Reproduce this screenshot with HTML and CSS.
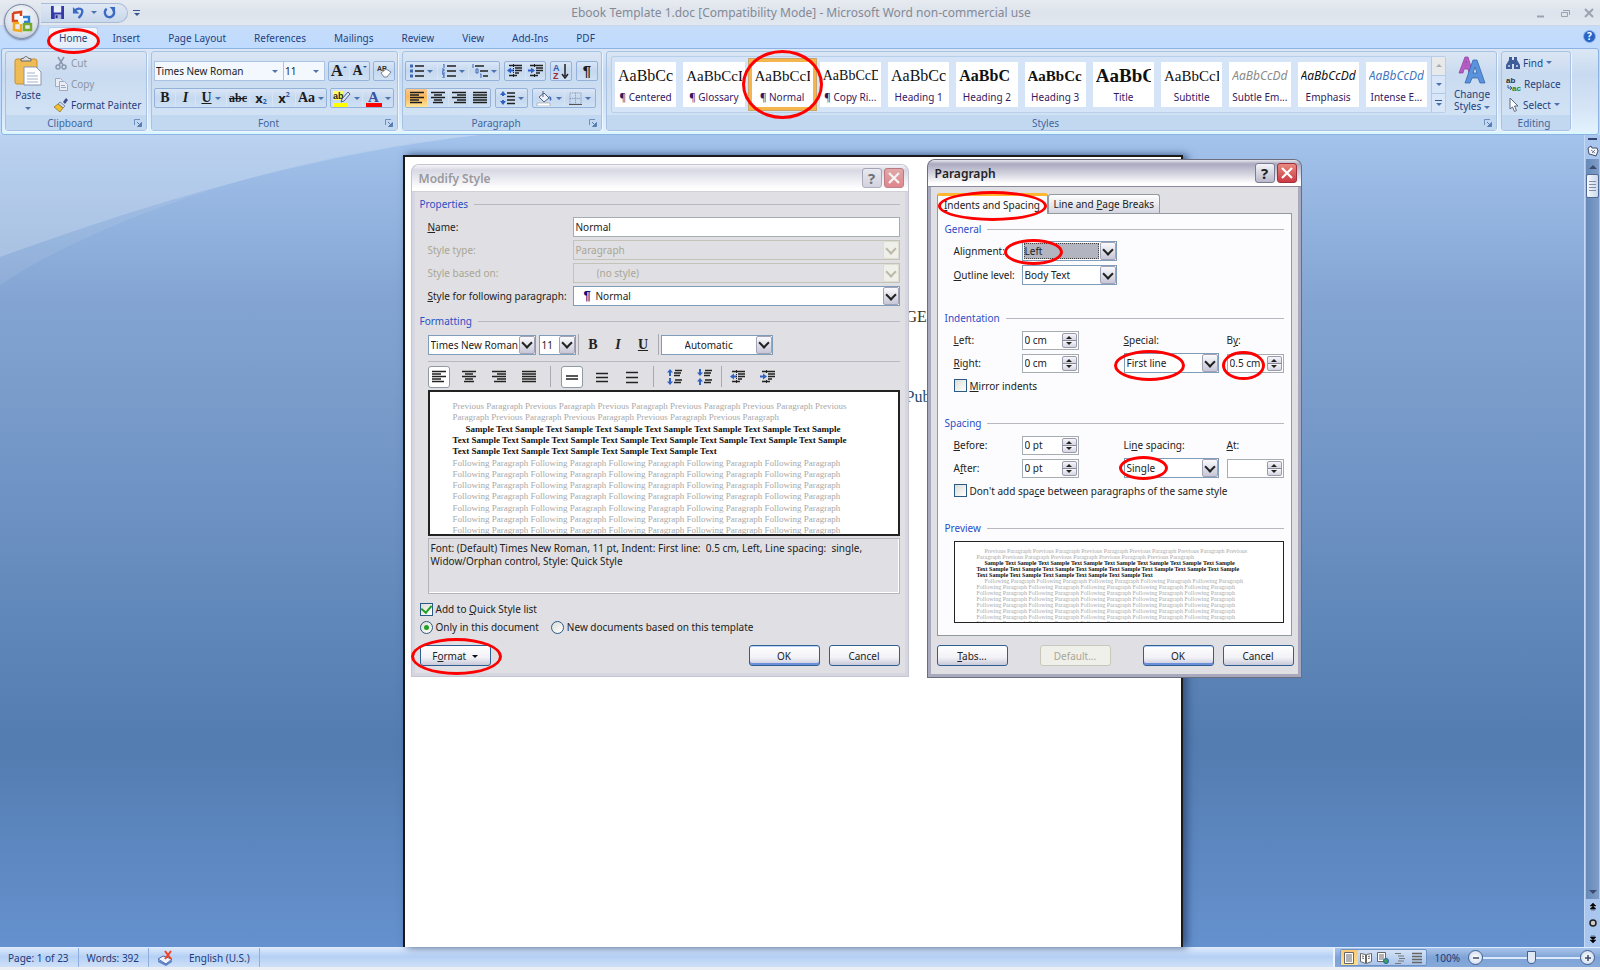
FILE: index.html
```html
<!DOCTYPE html>
<html lang="en">
<head>
<meta charset="utf-8">
<title>Ebook Template 1.doc [Compatibility Mode] - Microsoft Word non-commercial use</title>
<link rel="stylesheet" href="styles.css">
</head>
<body>
<svg class="defs" aria-hidden="true">
  <symbol id="lines-left" viewBox="0 0 16 14"><path d="M1 1.500h14M1 4h9M1 6.500h14M1 9h9M1 11.500h12" stroke="currentColor" stroke-width="1.500"/></symbol>
  <symbol id="lines-center" viewBox="0 0 16 14"><path d="M1 1.500h14M4 4h8M1 6.500h14M4 9h8M3 11.500h10" stroke="currentColor" stroke-width="1.500"/></symbol>
  <symbol id="lines-right" viewBox="0 0 16 14"><path d="M1 1.500h14M6 4h9M1 6.500h14M6 9h9M3 11.500h12" stroke="currentColor" stroke-width="1.500"/></symbol>
  <symbol id="lines-full" viewBox="0 0 16 14"><path d="M1 1.500h14M1 4h14M1 6.500h14M1 9h14M1 11.500h14" stroke="currentColor" stroke-width="1.500"/></symbol>
  <symbol id="outdent" viewBox="0 0 16 14"><path d="M2 1.500h13M8 4h7M8 6.500h7M8 9h4M2 11.500h8" stroke="#222" stroke-width="1.500"/><path d="M0 6.500l4-3v2h3v2H4v2z" fill="#2f62c4"/><path d="M6.500 0v14" stroke="#222" stroke-dasharray="1 1"/></symbol>
  <symbol id="indent" viewBox="0 0 16 14"><path d="M2 1.500h13M8 4h7M8 6.500h7M8 9h4M2 11.500h8" stroke="#222" stroke-width="1.500"/><path d="M7 6.500l-4-3v2H0v2h3v2z" fill="#2f62c4"/><path d="M6.500 0v3M6.500 10v4" stroke="#222" stroke-dasharray="1 1"/></symbol>
  <symbol id="launch" viewBox="0 0 8 8"><path d="M.5 6V.5H6" fill="none" stroke="#6f8fbd"/><path d="M3 3l3 3M7.500 3.500v4h-4z" fill="#5b7db0" stroke="#5b7db0"/></symbol>
  <symbol id="para-space-out" viewBox="0 0 16 16"><path d="M8 1.500h7M7 4h7M7 6.500h6M8 11h7M7 13.500h7" stroke="#222" stroke-width="1.500"/><path d="M3 0l3 3.500H4V7H2V3.500H0zM3 16l3-3.500H4V9H2v3.500H0z" fill="#2f62c4"/></symbol>
  <symbol id="para-space-in" viewBox="0 0 16 16"><path d="M8 1.500h7M7 4h7M7 6.500h6M8 11h7M7 13.500h7" stroke="#222" stroke-width="1.500"/><path d="M3 7l3-3.500H4V0H2v3.500H0zM3 9l3 3.500H4V16H2v-3.500H0z" fill="#2f62c4"/></symbol>
</svg>

<header class="titlebar">
  <button class="orb" aria-label="Office Button">
    <svg viewBox="0 0 24 24" width="24" height="24" fill="none" stroke-width="2.500"><path d="M3 3l8-1v4M3 3v8h5" stroke="#d8461c"/><path d="M13 7h6v5h-5" stroke="#2b7fd4"/><path d="M9 13H4v7l7 1v-7" stroke="#f5a81c"/><path d="M14 14h7v6h-7z" stroke="#74ab2c"/></svg>
  </button>
  <div class="quick">
    <button aria-label="Save"><svg viewBox="0 0 14 14" width="13" height="13"><path d="M0 0h14v14H0z" fill="#3438a8"/><path d="M3 0h8v7H3z" fill="#e8eefa"/><path d="M4 9h7v5H4z" fill="#aab6dd"/><path d="M5 10h2v3H5z" fill="#222a80"/></svg></button>
    <button aria-label="Undo"><svg viewBox="0 0 14 14" width="13" height="13"><path d="M3 5c4-4 9-2 8 2-.5 3-3 5-4 6" fill="none" stroke="#3a6ac2" stroke-width="2.400"/><path d="M1 1v7h7z" fill="#3a6ac2"/></svg></button>
    <i class="tri"></i>
    <button aria-label="Repeat"><svg viewBox="0 0 14 14" width="13" height="13"><path d="M4 3a5 5 0 1 0 6.500.5" fill="none" stroke="#3a6ac2" stroke-width="2.600"/><path d="M7 1h6v6z" fill="#3a6ac2"/></svg></button>
  </div>
  <button class="customize" aria-label="Customize"><i class="bar"></i><i class="tri"></i></button>
  <h1>Ebook Template 1.doc [Compatibility Mode] - Microsoft Word non-commercial use</h1>
  <div class="winctl">
    <button aria-label="Minimize"><svg viewBox="0 0 10 10" width="10" height="10"><path d="M1 8.500h7" stroke="#9ba3b0" stroke-width="2"/></svg></button>
    <button aria-label="Restore"><svg viewBox="0 0 10 10" width="10" height="10" fill="none" stroke="#9ba3b0"><path d="M1.500 4.500h6v4h-6zM3 2.500h6.500V7"/></svg></button>
    <button aria-label="Close"><svg viewBox="0 0 10 10" width="10" height="10"><path d="M1 1l8 8M9 1L1 9" stroke="#9ba3b0" stroke-width="2"/></svg></button>
  </div>
</header>

<nav class="tabs">
  <button class="tab active">Home<span class="ring ring-home"></span></button>
  <button class="tab">Insert</button>
  <button class="tab">Page Layout</button>
  <button class="tab">References</button>
  <button class="tab">Mailings</button>
  <button class="tab">Review</button>
  <button class="tab">View</button>
  <button class="tab">Add-Ins</button>
  <button class="tab">PDF</button>
  <button class="help" aria-label="Help">?</button>
</nav>

<section class="ribbon">
  <section class="group">
    <div class="group-body clip">
      <button class="paste"><svg viewBox="0 0 28 30" width="28" height="30"><rect x="1" y="3" width="22" height="25" rx="2" fill="#efbb55" stroke="#c98f2c"/><path d="M7 5V3l3-1c1-2 3-2 4 0l3 1v2z" fill="#ddd" stroke="#666"/><path d="M10 11h12l5 5v13H10z" fill="#fff" stroke="#8796b4"/><path d="M13 17h8M13 20h11M13 23h11M13 26h11" stroke="#a5b2cc"/></svg><span>Paste</span><i class="tri"></i></button>
      <div class="stack">
        <button class="cmd off"><svg viewBox="0 0 14 14" width="14" height="14" fill="none" stroke="#8b97ad" stroke-width="1.500"><path d="M4 1l5 8M10 1L5 9"/><circle cx="4" cy="11" r="2"/><circle cx="10" cy="11" r="2"/></svg>Cut</button>
        <button class="cmd off"><svg viewBox="0 0 14 14" width="14" height="14" fill="#e8edf5" stroke="#9daac2"><path d="M1.500 1.500h5l2 2v6h-7z"/><path d="M5.500 4.500h5l3 3v6h-8z"/><path d="M7 8.500h4M7 10.500h5"/></svg>Copy</button>
        <button class="cmd"><svg viewBox="0 0 14 14" width="14" height="14"><path d="M9 4l3-4 2 2-3 4z" fill="#3d4d8a"/><path d="M6 4l5 4-2 2-5-4z" fill="#cfd8ea" stroke="#5a6a95" stroke-width=".7"/><path d="M4 6l5 4-3 4-6-5z" fill="#f0c030" stroke="#8c6a20" stroke-width=".7"/></svg>Format Painter</button>
      </div>
    </div>
    <footer><span>Clipboard</span><button aria-label="Clipboard options"><svg width="8" height="8"><use href="#launch"/></svg></button></footer>
  </section>

  <section class="group">
    <div class="group-body rows">
      <div class="row">
        <div class="pair">
          <span class="flat font-name"><select aria-label="Font"><option>Times New Roman</option></select><i class="tri"></i></span>
          <span class="flat font-size"><select aria-label="Font size"><option>11</option></select><i class="tri"></i></span>
        </div>
        <div class="cells">
          <button class="serif big" aria-label="Grow Font"><b>A</b><i class="up"></i></button><button class="serif" aria-label="Shrink Font"><b>A</b><i class="down"></i></button>
        </div>
        <div class="cells"><button aria-label="Clear Formatting"><svg viewBox="0 0 16 14" width="16" height="14"><text x="1" y="7" font-size="7" font-weight="700" font-family="Liberation Sans" fill="#333">AB</text><path d="M5 9l5-4 5 3-4 5H8z" fill="#fff" stroke="#77839b"/></svg></button></div>
      </div>
      <div class="row">
        <div class="cells">
          <button class="serif"><b>B</b></button><button class="serif"><b><i>I</i></b></button><button class="serif split"><b><u>U</u></b><i class="tri"></i></button><button class="serif medium"><b><s>abc</s></b></button><button class="medium bold">x<sub>2</sub></button><button class="medium bold">x<sup>2</sup></button><button class="serif split"><b>Aa</b><i class="tri"></i></button>
        </div>
        <div class="cells">
          <button class="split" aria-label="Highlight"><svg viewBox="0 0 18 17" width="18" height="17"><path d="M0 13h15v4H0z" fill="#ff0"/><path d="M0 1h10v9H0z" fill="#ff6"/><text x="0" y="9" font-size="9" font-weight="700" font-family="Liberation Sans" fill="#222">ab</text><path d="M15 2l2 2-6 7-3 1 1-3z" fill="#dfe6f4" stroke="#4c5f8d"/></svg><i class="tri"></i></button>
          <button class="split" aria-label="Font Color"><svg viewBox="0 0 16 17" width="16" height="17"><text x="2" y="12" font-size="15" font-weight="700" font-family="Liberation Serif" fill="#3553a0">A</text><path d="M0 13h16v4H0z" fill="#f00"/></svg><i class="tri"></i></button>
        </div>
      </div>
    </div>
    <footer><span>Font</span><button aria-label="Font options"><svg width="8" height="8"><use href="#launch"/></svg></button></footer>
  </section>

  <section class="group">
    <div class="group-body rows para">
      <div class="row">
        <div class="cells">
          <button class="split" aria-label="Bullets"><svg viewBox="0 0 14 14" width="14" height="14"><path d="M5 2h9M5 7h9M5 12h9" stroke="#222" stroke-width="1.500"/><path d="M0 .5h3v3H0zM0 5.500h3v3H0zM0 10.500h3v3H0z" fill="#3f67b4"/></svg><i class="tri"></i></button>
          <button class="split" aria-label="Numbering"><svg viewBox="0 0 14 14" width="14" height="14"><path d="M5 2h9M5 7h9M5 12h9" stroke="#222" stroke-width="1.500"/><path d="M1 0h1v4M0 5h2v2H0v2h3M0 10h2v2H1M2 12v2H0" fill="none" stroke="#3f67b4"/></svg><i class="tri"></i></button>
          <button class="split" aria-label="Multilevel List"><svg viewBox="0 0 16 14" width="16" height="14"><path d="M3 2h9M8 7h8M11 12h5" stroke="#222" stroke-width="1.500"/><path d="M1 0v4M4 5v4h2V5zM8 10h1v4" fill="none" stroke="#3f67b4"/></svg><i class="tri"></i></button>
        </div>
        <div class="cells"><button aria-label="Decrease Indent"><svg width="16" height="14"><use href="#outdent"/></svg></button><button aria-label="Increase Indent"><svg width="16" height="14"><use href="#indent"/></svg></button></div>
        <div class="cells"><button aria-label="Sort"><svg viewBox="0 0 16 16" width="16" height="16"><text x="0" y="8" font-size="9" font-weight="700" font-family="Liberation Sans" fill="#3458b0">A</text><text x="0" y="16" font-size="9" font-weight="700" font-family="Liberation Sans" fill="#a02828">Z</text><path d="M12 1v12M9 11l3 4 3-4" fill="none" stroke="#222" stroke-width="1.500"/></svg></button></div>
        <div class="cells"><button class="pilcrow" aria-label="Show marks">¶</button></div>
      </div>
      <div class="row">
        <div class="cells aligns"><button class="on" aria-label="Align Left"><svg width="16" height="14"><use href="#lines-left"/></svg></button><button aria-label="Center"><svg width="16" height="14"><use href="#lines-center"/></svg></button><button aria-label="Align Right"><svg width="16" height="14"><use href="#lines-right"/></svg></button><button aria-label="Justify"><svg width="16" height="14"><use href="#lines-full"/></svg></button></div>
        <div class="cells"><button class="split" aria-label="Line spacing"><svg viewBox="0 0 15 14" width="15" height="14"><path d="M7 2h8M7 5.500h8M7 9h8M7 12.500h8" stroke="#222" stroke-width="1.500"/><path d="M3 0l3 4H4v1H2V4H0zM3 14l3-4H4V9H2v1H0z" fill="#2f62c4"/></svg><i class="tri"></i></button></div>
        <div class="cells"><button class="split" aria-label="Shading"><svg viewBox="0 0 17 15" width="17" height="15"><path d="M3 6l5-4 5 5-5 4z" fill="#eef2fa" stroke="#55627f"/><path d="M7 0v6" stroke="#55627f"/><path d="M13 5c3 1 3 4 1 5z" fill="#3a66c0"/><path d="M1 12h13v3H1z" fill="#fff" stroke="#999" stroke-width=".6"/></svg><i class="tri"></i></button><button class="split" aria-label="Borders"><svg viewBox="0 0 14 14" width="13" height="13"><path d="M1 1h12v12H1zM7 1v12M1 7h12" fill="none" stroke="#7d8ba5" stroke-dasharray="1 1"/><path d="M0 13.500h14" stroke="#444"/></svg><i class="tri"></i></button></div>
      </div>
    </div>
    <footer><span>Paragraph</span><button aria-label="Paragraph options"><svg width="8" height="8"><use href="#launch"/></svg></button></footer>
  </section>

  <section class="group grow">
    <div class="group-body styles">
      <div class="gallery">
        <div class="items">
          <button class="style"><span class="sample s16">AaBbCc</span><span>¶ Centered</span></button>
          <button class="style"><span class="sample s14">AaBbCcD</span><span>¶ Glossary</span></button>
          <button class="style chosen"><span class="sample s14">AaBbCcD</span><span>¶ Normal</span><span class="ring ring-normal"></span></button>
          <button class="style"><span class="sample s13">AaBbCcD</span><span>¶ Copy Ri...</span></button>
          <button class="style"><span class="sample s16">AaBbCc</span><span>Heading 1</span></button>
          <button class="style"><span class="sample s16 strong">AaBbC</span><span>Heading 2</span></button>
          <button class="style"><span class="sample s14 strong">AaBbCc</span><span>Heading 3</span></button>
          <button class="style"><span class="sample s19 strong">AaBbC</span><span>Title</span></button>
          <button class="style"><span class="sample s14">AaBbCcD</span><span>Subtitle</span></button>
          <button class="style"><span class="sample sans grey">AaBbCcDd</span><span>Subtle Em...</span></button>
          <button class="style"><span class="sample sans">AaBbCcDd</span><span>Emphasis</span></button>
          <button class="style"><span class="sample sans blue">AaBbCcDd</span><span>Intense E...</span></button>
        </div>
        <div class="scroller"><button class="dim" aria-label="Row up"><i class="tri flip"></i></button><button aria-label="Row down"><i class="tri"></i></button><button aria-label="More"><i class="bar"></i><i class="tri"></i></button></div>
      </div>
      <button class="change"><svg viewBox="0 0 28 28" width="28" height="28"><path d="M1 17L7 1h3l5 16h-4l-1-4H6l-1 4zM7 9h2L8 5z" fill="#b75cc4" stroke="#8b3a9b" stroke-width=".7"/><path d="M7 27L15 4h4l8 23h-5l-2-5h-6l-2 5zM15 17h4l-2-6z" fill="#5a92dc" stroke="#2d5ea8" stroke-width=".7"/></svg><span>Change<br>Styles <i class="tri"></i></span></button>
    </div>
    <footer><span>Styles</span><button aria-label="Styles options"><svg width="8" height="8"><use href="#launch"/></svg></button></footer>
  </section>

  <section class="group">
    <div class="group-body stack edit">
      <button class="cmd"><svg viewBox="0 0 14 14" width="14" height="14" fill="#3d5c98"><path d="M3 1h3v3h2V1h3v3l3 5v4H8V8H6v5H0V9l3-5z"/><path d="M2 10h2M10 10h2" stroke="#c8d6ee" stroke-width="1.500"/></svg>Find <i class="tri"></i></button>
      <button class="cmd"><svg viewBox="0 0 15 14" width="15" height="14"><text x="0" y="6" font-size="8" font-weight="700" font-family="Liberation Sans" fill="#333">ab</text><text x="6" y="14" font-size="8" font-weight="700" font-family="Liberation Sans" fill="#178a28">ac</text><path d="M2 8v3h3M4 9l2 2-2 2" fill="none" stroke="#3a5c9c"/></svg>Replace</button>
      <button class="cmd"><svg viewBox="0 0 14 14" width="14" height="14"><path d="M4 0v11l2.500-2 2 4.500 2-1L8.500 8H12z" fill="#fff" stroke="#5a6784"/></svg>Select <i class="tri"></i></button>
    </div>
    <footer><span>Editing</span></footer>
  </section>
</section>

<main class="work">
  <div class="canvas">
    <svg class="swoosh" viewBox="0 0 480 150" width="480" height="150" aria-hidden="true"><path d="M0 0h480C270 20 90 90 0 150z" fill="#fff" fill-opacity=".08"/><path d="M0 0h480C300 20 130 75 0 122z" fill="#fff" fill-opacity=".2"/></svg>
    <article class="page">
      <p class="line-one">GE</p>
      <p class="line-two">Pub</p>

      <section class="dialog inactive modify" aria-label="Modify Style">
        <header><h2>Modify Style</h2><button class="q" aria-label="Help">?</button><button class="x" aria-label="Close"><svg viewBox="0 0 12 12" width="12" height="12"><path d="M1 1l10 10M11 1L1 11" stroke="#fff" stroke-width="2.200"/></svg></button></header>
        <div class="body">
          <h3>Properties</h3>
          <div class="form">
            <label for="sname"><u>N</u>ame:</label><input id="sname" type="text" value="Normal">
            <label class="off" for="stype">Style type:</label><span class="combo off"><select id="stype" disabled><option>Paragraph</option></select><i class="drop"></i></span>
            <label class="off" for="sbase">Style based on:</label><span class="combo off inset"><select id="sbase" disabled><option>(no style)</option></select><i class="drop"></i></span>
            <label for="snext"><u>S</u>tyle for following paragraph:</label><span class="combo"><b class="mark">¶</b><select id="snext"><option>Normal</option></select><i class="drop"></i></span>
          </div>
          <h3>Formatting</h3>
          <div class="bar1">
            <span class="combo fname"><select aria-label="Font"><option>Times New Roman</option></select><i class="drop"></i></span>
            <span class="combo fsize"><select aria-label="Size"><option>11</option></select><i class="drop"></i></span>
            <i class="sep"></i>
            <button class="serif"><b>B</b></button><button class="serif"><b><i>I</i></b></button><button class="serif"><b><u>U</u></b></button>
            <i class="sep"></i>
            <span class="combo fcolor"><select aria-label="Color"><option>Automatic</option></select><i class="drop"></i></span>
          </div>
          <div class="bar2">
            <button class="on" aria-label="Left"><svg width="16" height="14"><use href="#lines-left"/></svg></button><button aria-label="Center"><svg width="16" height="14"><use href="#lines-center"/></svg></button><button aria-label="Right"><svg width="16" height="14"><use href="#lines-right"/></svg></button><button aria-label="Justify"><svg width="16" height="14"><use href="#lines-full"/></svg></button>
            <i class="sep"></i>
            <button class="on" aria-label="Single"><svg viewBox="0 0 14 14" width="14" height="14"><path d="M1 6h12M1 9h12" stroke="#222" stroke-width="1.500"/></svg></button><button aria-label="1.5 lines"><svg viewBox="0 0 14 14" width="14" height="14"><path d="M1 3.500h12M1 7.500h12M1 11.500h12" stroke="#222" stroke-width="1.300"/></svg></button><button aria-label="Double"><svg viewBox="0 0 14 14" width="14" height="14"><path d="M1 2.500h12M1 7.500h12M1 12.500h12" stroke="#222" stroke-width="1.300"/></svg></button>
            <i class="sep"></i>
            <button aria-label="More space"><svg width="16" height="16"><use href="#para-space-out"/></svg></button><button aria-label="Less space"><svg width="16" height="16"><use href="#para-space-in"/></svg></button>
            <i class="sep near"></i>
            <button aria-label="Outdent"><svg width="16" height="14"><use href="#outdent"/></svg></button><button aria-label="Indent"><svg width="16" height="14"><use href="#indent"/></svg></button>
          </div>
          <div class="preview">
            <p>Previous Paragraph Previous Paragraph Previous Paragraph Previous Paragraph Previous Paragraph Previous<br>Paragraph Previous Paragraph Previous Paragraph Previous Paragraph Previous Paragraph</p>
            <p class="sampletext">Sample Text Sample Text Sample Text Sample Text Sample Text Sample Text Sample Text Sample<br>Text Sample Text Sample Text Sample Text Sample Text Sample Text Sample Text Sample Text Sample<br>Text Sample Text Sample Text Sample Text Sample Text Sample Text</p>
            <p>Following Paragraph Following Paragraph Following Paragraph Following Paragraph Following Paragraph<br>Following Paragraph Following Paragraph Following Paragraph Following Paragraph Following Paragraph<br>Following Paragraph Following Paragraph Following Paragraph Following Paragraph Following Paragraph<br>Following Paragraph Following Paragraph Following Paragraph Following Paragraph Following Paragraph</p>
            <p>Following Paragraph Following Paragraph Following Paragraph Following Paragraph Following Paragraph<br>Following Paragraph Following Paragraph Following Paragraph Following Paragraph Following Paragraph<br>Following Paragraph Following Paragraph Following Paragraph Following Paragraph Following Paragraph</p>
          </div>
          <div class="desc">Font: (Default) Times New Roman, 11 pt, Indent: First line:&nbsp; 0.5 cm, Left, Line spacing:&nbsp; single,<br>Widow/Orphan control, Style: Quick Style</div>
          <div class="checks">
            <label><input type="checkbox" checked><span>Add to <u>Q</u>uick Style list</span></label>
          </div>
          <div class="checks">
            <label><input type="radio" name="scope" checked>Only in this document</label>
            <label><input type="radio" name="scope">New documents based on this template</label>
          </div>
          <div class="actions">
            <button class="btn">F<u>o</u>rmat <i class="tri black"></i><span class="ring ring-format"></span></button>
            <button class="btn default push">OK</button>
            <button class="btn">Cancel</button>
          </div>
        </div>
      </section>

      <section class="dialog para-dialog" aria-label="Paragraph">
        <header><h2>Paragraph</h2><button class="q" aria-label="Help">?</button><button class="x" aria-label="Close"><svg viewBox="0 0 12 12" width="12" height="12"><path d="M1 1l10 10M11 1L1 11" stroke="#fff" stroke-width="2.200"/></svg></button></header>
        <div class="body">
          <div class="dtabs">
            <button class="dtab current"><u>I</u>ndents and Spacing<span class="ring ring-tab"></span></button>
            <button class="dtab">Line and <u>P</u>age Breaks</button>
          </div>
          <div class="panel">
            <h3>General</h3>
            <div class="fields general">
              <div class="line tall"><label for="al">Ali<u>g</u>nment:</label><span class="combo mid sel"><select id="al"><option>Left</option></select><i class="drop"></i><span class="ring ring-left"></span></span></div>
              <div class="line tall"><label for="ol"><u>O</u>utline level:</label><span class="combo mid"><select id="ol"><option>Body Text</option></select><i class="drop"></i></span></div>
            </div>
            <h3>Indentation</h3>
            <div class="fields">
              <div class="line"><label for="il"><u>L</u>eft:</label><span class="spin"><input id="il" type="text" value="0 cm"><i class="ud"></i></span><div class="right"><label for="sp"><u>S</u>pecial:</label><label for="by">B<u>y</u>:</label></div></div>
              <div class="line"><label for="ir"><u>R</u>ight:</label><span class="spin"><input id="ir" type="text" value="0 cm"><i class="ud"></i></span><div class="right"><span class="combo"><select id="sp"><option>First line</option></select><i class="drop"></i><span class="ring ring-first"></span></span><span class="spin"><input id="by" type="text" value="0.5 cm"><i class="ud"></i><span class="ring ring-by"></span></span></div></div>
              <div class="checks mirror"><label><input type="checkbox"><span><u>M</u>irror indents</span></label></div>
            </div>
            <h3>Spacing</h3>
            <div class="fields">
              <div class="line"><label for="sb"><u>B</u>efore:</label><span class="spin"><input id="sb" type="text" value="0 pt"><i class="ud"></i></span><div class="right"><label for="ls">Li<u>n</u>e spacing:</label><label for="at"><u>A</u>t:</label></div></div>
              <div class="line"><label for="sa">A<u>f</u>ter:</label><span class="spin"><input id="sa" type="text" value="0 pt"><i class="ud"></i></span><div class="right"><span class="combo"><select id="ls"><option>Single</option></select><i class="drop"></i><span class="ring ring-single"></span></span><span class="spin"><input id="at" type="text" value=""><i class="ud"></i></span></div></div>
              <div class="checks"><label><input type="checkbox"><span>Don't add spa<u>c</u>e between paragraphs of the same style</span></label></div>
            </div>
            <h3>Preview</h3>
            <div class="preview small">
              <p class="first">Previous Paragraph Previous Paragraph Previous Paragraph Previous Paragraph Previous Paragraph Previous<br>Paragraph Previous Paragraph Previous Paragraph Previous Paragraph Previous Paragraph</p>
              <p class="sampletext">Sample Text Sample Text Sample Text Sample Text Sample Text Sample Text Sample Text Sample<br>Text Sample Text Sample Text Sample Text Sample Text Sample Text Sample Text Sample Text Sample<br>Text Sample Text Sample Text Sample Text Sample Text Sample Text</p>
              <p class="first">Following Paragraph Following Paragraph Following Paragraph Following Paragraph Following Paragraph<br>Following Paragraph Following Paragraph Following Paragraph Following Paragraph Following Paragraph<br>Following Paragraph Following Paragraph Following Paragraph Following Paragraph Following Paragraph<br>Following Paragraph Following Paragraph Following Paragraph Following Paragraph Following Paragraph<br>Following Paragraph Following Paragraph Following Paragraph Following Paragraph Following Paragraph<br>Following Paragraph Following Paragraph Following Paragraph Following Paragraph Following Paragraph<br>Following Paragraph Following Paragraph Following Paragraph Following Paragraph Following Paragraph<br>Following Paragraph Following Paragraph Following Paragraph</p>
            </div>
          </div>
          <div class="actions">
            <button class="btn"><u>T</u>abs...</button>
            <button class="btn push" disabled>Default...</button>
            <button class="btn default push">OK</button>
            <button class="btn">Cancel</button>
          </div>
        </div>
      </section>
    </article>
  </div>
  <div class="rail">
    <i class="splitter"></i>
    <button aria-label="View Ruler"><svg viewBox="0 0 12 12" width="12" height="12" fill="#f4f7fc" stroke="#44506a"><path d="M1 3l3-2 1 2h5l1 3-2 5-3-1-4-1z"/><path d="M4 5l4 3M8 5L5 8" stroke-width=".7"/></svg></button>
    <div class="track"><i class="tri flip dark"></i><i class="thumb"></i><i class="tri dark end"></i></div>
    <button class="hop" aria-label="Previous Page"><svg viewBox="0 0 8 8" width="8" height="8"><path d="M4 0l3 3H1zM4 3l3 3H1zM2 7h4" stroke="#111" stroke-width=".5"/></svg></button>
    <button class="hop" aria-label="Browse"><svg viewBox="0 0 8 8" width="8" height="8"><circle cx="4" cy="4" r="3" fill="#ccc" stroke="#222" stroke-width="1.500"/></svg></button>
    <button class="hop" aria-label="Next Page"><svg viewBox="0 0 8 8" width="8" height="8"><path d="M4 8l3-3H1zM4 5l3-3H1zM2 1h4" stroke="#111" stroke-width=".5"/></svg></button>
  </div>
</main>

<footer class="status">
  <button>Page: 1 of 23</button>
  <button>Words: 392</button>
  <button class="lang"><svg viewBox="0 0 16 16" width="16" height="16"><path d="M1 9l5-3 9 3-6 5z" fill="#eef3fb" stroke="#4a68a4"/><path d="M1 10l8 4 6-4v2l-6 4-8-4z" fill="#5b80c4"/><path d="M8 1l6 8M14 1L8 9" stroke="#f04020" stroke-width="2"/></svg>English (U.S.)</button>
  <div class="viewbar">
    <div class="views">
      <button class="on" aria-label="Print Layout"><svg viewBox="0 0 12 12" width="12" height="12" fill="#fff" stroke="#666"><path d="M1.500.5h9v11h-9zM3 3h6M3 5h6M3 7h6M3 9h6"/></svg></button>
      <button aria-label="Reading"><svg viewBox="0 0 12 12" width="12" height="12" fill="#fff" stroke="#666"><path d="M.5 1.500l5 1v9l-5-2zM11.500 1.500l-5 1v9l5-2zM2 4l2 .5M2 6l2 .5M10 4l-2 .5M10 6l-2 .5"/></svg></button>
      <button aria-label="Web"><svg viewBox="0 0 12 12" width="12" height="12" fill="#fff" stroke="#666"><path d="M.5.500h8v9h-8zM2 3h5M2 5h5M2 7h5"/><circle cx="9" cy="9" r="2.500" fill="#3aa05a" stroke="#2a60b0"/></svg></button>
      <button aria-label="Outline"><svg viewBox="0 0 12 12" width="12" height="12" stroke="#777"><path d="M1 1.500h6M4 4h6M5 6.500h6M4 9h6M1 11.500h6"/></svg></button>
      <button aria-label="Draft"><svg viewBox="0 0 12 12" width="12" height="12" stroke="#666" stroke-width="1.500"><path d="M1 1.500h10M1 4.500h10M1 7.500h10M1 10.500h10"/></svg></button>
    </div>
    <button class="pct">100%</button>
    <button class="round" aria-label="Zoom Out"><svg viewBox="0 0 8 8" width="8" height="8"><path d="M1 4h6" stroke="#3a4a66" stroke-width="1.500"/></svg></button>
    <input class="zoom" type="range" min="0" max="100" value="50" aria-label="Zoom">
    <button class="round" aria-label="Zoom In"><svg viewBox="0 0 8 8" width="8" height="8"><path d="M1 4h6M4 1v6" stroke="#3a4a66" stroke-width="1.500"/></svg></button>
  </div>
</footer>
</body>
</html>
```
FILE: styles.css
```css
* { box-sizing: border-box; }
body { margin: 0; height: 100vh; display: flex; flex-direction: column; overflow: hidden; background: #bfdbff; font: 10px/12px "Noto Sans", "DejaVu Sans", sans-serif; color: #222; }
button, input, select { font: inherit; color: inherit; margin: 0; padding: 0; border: 0; background: none; }
h1, h2, h3, p { margin: 0; font-weight: 400; }
svg { display: block; flex: none; }
.defs { position: absolute; width: 0; height: 0; }
select { appearance: none; outline: 0; opacity: 1; min-width: 0; line-height: 16px; }
input { min-width: 0; }
.tri { display: inline-block; flex: none; border: 3px solid transparent; border-top-color: #4d73ae; border-bottom: 0; vertical-align: middle; }
.tri.flip { border-top: 0; border-bottom: 3px solid #4d73ae; }
.tri.black { border-top-color: #111; margin-left: 3px; }
.bar { display: block; width: 7px; height: 1px; background: #35568f; margin-bottom: 2px; }
.ring { position: absolute; border: 3px solid #f00; border-radius: 50%; z-index: 5; pointer-events: none; }

.titlebar { position: relative; display: flex; align-items: center; height: 26px; padding: 0 6px 0 41px; background: linear-gradient(#e7ebf1, #dde3ec 50%, #e3e8f0); border-bottom: 1px solid #c9d6e8; }
.orb { position: absolute; left: 4px; top: 4px; width: 35px; height: 35px; border-radius: 50%; border: 1px solid #7785a0; display: grid; place-items: center; background: radial-gradient(circle at 50% 35%, #fff, #dbe1ea 60%, #a9b6cb); box-shadow: 0 1px 2px #6b7fa2; z-index: 3; }
.quick { display: flex; align-items: center; gap: 8px; height: 20px; width: 87px; padding: 0 8px 0 10px; border: 1px solid #a9bbd6; border-left: 0; border-radius: 0 10px 10px 0; background: linear-gradient(#dfe8f4, #c9d8ec); }
.quick .tri { margin: 0 -2px; }
.customize { margin-left: 5px; display: grid; justify-items: center; }
.customize .tri { border-top-color: #35568f; }
.titlebar h1 { flex: 1; padding-right: 74px; text-align: center; font-size: 12px; line-height: 16px; color: #838a96; }
.winctl { display: flex; gap: 14px; }

.tabs { display: flex; align-items: flex-end; height: 22px; padding-left: 48px; background: linear-gradient(#c6dcf9, #bfdbff); color: #243f80; }
.tab { position: relative; height: 21px; padding: 0 14px; }
.tab.active { padding: 0 10px; border: 1px solid #b5cdec; border-bottom: 0; border-radius: 3px 3px 0 0; background: linear-gradient(#f4f8fd, #e3edf9); }
.ring-home { inset: 0 -3px -6px -2px; }
.help { margin: 0 4px 5px auto; width: 13px; height: 13px; border-radius: 50%; background: #2763c8; color: #fff; font-weight: 700; line-height: 11px; border: 1px solid #8fb0e2; }

.ribbon { display: flex; gap: 4px; height: 87px; padding: 2px 27px 3px 3px; margin: 0 1px; border: 1px solid #8db2e3; border-radius: 3px; background: linear-gradient(#dbe7f5, #c8daf0 30%, #d6e5f6 70%, #e4f3ff); box-shadow: inset 0 -2px 0 #d9f7ff; color: #243f80; }
.group { display: flex; flex-direction: column; border: 1px solid #a8c2e3; border-radius: 3px; background: linear-gradient(#dbe6f4, #c9dbf0 28%, #d6e5f7); box-shadow: 1px 1px 0 #eef6ff; }
.group.grow { flex: 1; min-width: 0; }
.group-body { flex: 1; display: flex; padding: 0 4px; }
.group > footer { display: flex; align-items: center; height: 15px; padding-right: 4px; background: #c1d8f0; color: #41669f; }
.group > footer span { flex: 1; text-align: center; }
.clip { gap: 8px; width: 140px; }
.paste { display: flex; flex-direction: column; align-items: center; width: 36px; padding-top: 4px; gap: 2px; line-height: 15px; }
.paste .tri { margin-top: 2px; }
.stack { display: flex; flex-direction: column; }
.cmd { display: flex; align-items: center; gap: 3px; height: 21px; white-space: nowrap; }
.cmd.off { color: #8d95a3; }
.edit { width: 68px; }
.rows { flex-direction: column; gap: 7px; padding: 9px 2px 0; }
.row { display: flex; gap: 3px; height: 20px; }
.para .row { gap: 4px; }
.para { padding-right: 3px; }
.pair { display: flex; }
.flat { display: flex; align-items: center; background: #f3f8fe; border: 1px solid #abc3e2; color: #222; padding: 0 5px 0 1px; }
.flat select { flex: 1; }
.font-name { width: 130px; }
.font-size { width: 41px; border-left: 0; }
.cells { display: flex; border: 1px solid #94b2d9; border-radius: 2px; background: linear-gradient(#d9e6f6, #c5d8ef 50%, #d0e1f5); }
.cells button { display: flex; align-items: center; justify-content: center; width: 20px; color: #1c1c1c; }
.cells button + button { border-left: 1px solid #d7e4f4; }
.cells .split { width: 31px; gap: 3px; }
.cells .medium { width: 23px; }
.aligns button { width: 21px; }
.cells .on { background: linear-gradient(#f8c98e, #fdb758 45%, #ffe59a); }
.cells sup, .cells sub { font-size: 7px; line-height: 8px; color: #2f57a8; }
.cells sup { align-self: flex-start; margin-top: 2px; }
.cells sub { align-self: flex-end; margin-bottom: 1px; }
.cells .serif { font-family: "Liberation Serif", serif; font-size: 14px; line-height: 14px; }
.bar1 .serif { font-family: "Liberation Serif", serif; font-size: 14px; line-height: 14px; }
.serif s { font-size: 12px; }
.cells .big { font-size: 17px; }
.cells .bold { font-weight: 700; font-size: 13px; }
.up, .down { border: 2px solid transparent; align-self: flex-start; margin-top: 4px; }
.up { border-bottom-color: #2f57a8; border-top: 0; }
.down { border-top-color: #2f57a8; border-bottom: 0; }
.cells .pilcrow { font: 700 15px/16px "Liberation Sans", sans-serif; }

.styles { gap: 4px; padding: 4px 2px 2px 4px; }
.gallery { flex: 1; display: flex; min-width: 0; height: 57px; border: 1px solid #b8cfec; border-radius: 2px; background: #d5e5f7; }
.items { flex: 1; display: grid; grid-template-columns: repeat(12, minmax(0, 1fr)); gap: 7px; padding: 5px 4px 5px 3px; }
.style { position: relative; display: flex; flex-direction: column; background: #fff; color: #35185f; padding: 4px 3px 3px; line-height: 13px; text-align: center; white-space: nowrap; }
.style > span { display: block; width: 100%; }
.sample { flex: 1; overflow: hidden; text-align: left; font-family: "Liberation Serif", serif; line-height: 20px; color: #111; }
.s13 { font-size: 14px; }
.s14 { font-size: 15px; }
.s16 { font-size: 16px; }
.s19 { font-size: 19px; }
.strong { font-weight: 700; }
.sans { font-family: "Noto Sans", sans-serif; font-style: italic; font-size: 12px; }
.grey { color: #8a8a8a; }
.blue { color: #3f78c0; }
.chosen { box-shadow: 0 0 0 3px #f6b54c, 0 0 0 4px #c9a66a; }
.style > .ring-normal { inset: -12px -10px; width: auto; }
.scroller { width: 14px; display: flex; flex-direction: column; border-left: 1px solid #b0c9e8; }
.scroller button { flex: 1; display: grid; place-content: center; justify-items: center; background: #d8e6f8; }
.scroller button + button { border-top: 1px solid #b0c9e8; }
.scroller .dim { background: #e8e9eb; }
.scroller .dim .tri { border-bottom-color: #a9adb5; }
.change { width: 44px; display: flex; flex-direction: column; align-items: center; gap: 4px; }

.work { flex: 1; display: flex; min-height: 0; }
.canvas { position: relative; flex: 1; padding: 20px 0 0 1px; background: linear-gradient(#a3c3ec, #84a5d3 20%, #537cb0 75%, #6591ce); }
.swoosh { position: absolute; left: 0; top: 0; }
.page { position: relative; width: 780px; height: 100%; margin: 0 auto; border: solid #1a1a1a; border-width: 2px 2px 0; background: #fff; box-shadow: 4px 0 8px #34507c; font: 16px/20px "Liberation Serif", serif; }
.line-one { padding: 150px 0 0 501px; color: #3d3420; }
.line-two { padding: 60px 0 0 501px; color: #1c4a6a; }

.dialog { position: absolute; border: 3px solid #a9a9bd; border-top: 0; border-radius: 7px 7px 0 0; background: #e0dfe3; box-shadow: 0 0 0 1px #6d6d80; font: 10px/12px "Noto Sans", "DejaVu Sans", sans-serif; color: #222; }
.modify { left: 7px; top: 8px; width: 496px; }
.para-dialog { left: 523px; top: 3px; width: 373px; }
.dialog > header { display: flex; align-items: center; gap: 2px; height: 27px; margin: 0 -3px; padding: 0 4px 0 7px; border-radius: 7px 7px 0 0; background: linear-gradient(#e8e8ee, #a9a9c0 15%, #d0d0dc 50%, #fff 90%); border-bottom: 1px solid #8a8a9a; }
.dialog h2 { flex: 1; padding-top: 2px; font-size: 12px; font-weight: 600; line-height: 16px; color: #222; }
.q, .x { width: 20px; height: 20px; border: 1px solid #7c7c96; border-radius: 3px; display: grid; place-items: center; background: linear-gradient(#f4f4f8, #b9b9cc); font-size: 15px; font-weight: 700; }
.x { border-color: #a03040; background: linear-gradient(#e88a80, #cc3a42); }
.inactive { border-color: #d6d6e0; box-shadow: 0 0 0 1px #c4c4d2; }
.inactive > header { background: linear-gradient(#f4f4f8, #d8d8e4 20%, #fff 90%); border-color: #d0d0d8; }
.inactive h2 { color: #9a9a9e; }
.inactive .q, .inactive .x { opacity: .6; }
.dialog h3 { display: flex; align-items: center; gap: 6px; height: 16px; font-size: 10px; color: #2b4fc6; }
.dialog h3::after { content: ""; flex: 1; height: 1px; background: #b9b7c0; }
.modify .body { padding: 4px 5px 7px; }
.form { display: grid; grid-template-columns: 145px 1fr; grid-auto-rows: 20px; row-gap: 3px; align-items: center; padding: 5px 0 7px 8px; }
.form > input, .form > .combo { height: 20px; }
.form > input { border: 1px solid #a5acb2; background: #fff; padding: 0 2px; }
.off { color: #a9a695; }
.combo { position: relative; display: flex; align-items: stretch; height: 20px; border: 1px solid #7f9db9; background: #fff; }
.combo select { flex: 1; padding-left: 2px; }
.combo.off { background: #e0dfe3; border-color: #c4c3b8; }
.combo.inset select { padding-left: 23px; }
.mark { align-self: center; padding-left: 10px; width: 20px; color: #101080; font: 700 13px/14px "Liberation Sans", sans-serif; }
.drop { display: grid; place-items: center; width: 16px; border: 1px solid #a3a3b8; border-radius: 2px; background: linear-gradient(#fafafd, #c6c6d6); }
.drop::before { content: ""; width: 6px; height: 6px; margin-top: -3px; border: solid #222; border-width: 0 2px 2px 0; transform: rotate(45deg); }
.off .drop { background: #f0f0ea; border-color: #ddddd2; }
.off .drop::before { border-color: #bbb9a8; }
.bar1, .bar2 { display: flex; align-items: center; margin-left: 8px; }
.bar1 { height: 33px; padding: 4px 0 5px; border-bottom: 1px solid #b9b7c0; }
.fname { width: 108px; margin-right: 3px; }
.fsize { width: 37px; }
.sep { width: 1px; height: 21px; background: #a9a9b2; margin: 0 2px; }
.bar1 button { width: 25px; }
.fcolor { width: 112px; }
.fcolor select { padding-left: 23px; }
.bar2 { height: 28px; gap: 8px; padding-top: 1px; }
.bar2 button { display: grid; place-items: center; width: 22px; height: 22px; border-radius: 3px; }
.bar2 .on { background: #fff; border: 1px solid #8d9aa5; }
.bar2 .sep { margin: 0 2px; }
.bar2 .near { margin: 0 -3px; }
.preview { height: 146px; margin-left: 8px; padding: 9px 0 0 23px; overflow: hidden; border: 2px solid #222; background: #fff; color: #a9a9a9; font: 9px/11px "Liberation Serif", serif; white-space: nowrap; }
.preview p { margin-bottom: 1px; }
.sampletext { color: #111; font-weight: 700; text-indent: 13px; }
.desc { height: 56px; margin: 2px 0 6px 8px; padding: 3px 2px; border: 1px solid #b4b4ba; box-shadow: inset -1px -1px 0 #fff; line-height: 13px; white-space: nowrap; }
.checks { display: flex; gap: 12px; height: 18px; align-items: center; }
.checks label { display: flex; align-items: center; white-space: pre; }
.checks input { appearance: none; width: 13px; height: 13px; margin-right: 3px; border: 1px solid #2a5a86; background: linear-gradient(135deg, #dcdcd7, #fff); display: grid; place-items: center; }
.checks input[type="radio"] { border-radius: 50%; }
.checks input[type="checkbox"]:checked::before { content: ""; width: 5px; height: 8px; margin-top: -2px; border: solid #21a121; border-width: 0 2px 2px 0; transform: rotate(40deg); }
.checks input[type="radio"]:checked::before { content: ""; width: 5px; height: 5px; border-radius: 50%; background: #21a121; }
.actions { display: flex; gap: 9px; margin-top: 9px; }
.btn { position: relative; flex: none; width: 71px; height: 21px; border: 1px solid #2f5f92; border-radius: 3px; background: linear-gradient(#fff, #f2f2f7 60%, #c9c9da); }
.push { margin-left: auto; }
.default { box-shadow: inset 0 1px 0 #bcd6fa, inset 0 -2px 0 #6a8fdc; }
.btn:disabled { color: #a9a695; border-color: #c9c7ba; background: #f0f0ea; }
.ring-format { inset: -8px -12px -10px -10px; }

.para-dialog .body { padding: 4px 4px 8px 6px; }
.dtabs { display: flex; align-items: flex-end; height: 22px; }
.dtab { position: relative; height: 19px; padding: 0 5px; border: 1px solid #919b9c; border-bottom: 0; border-radius: 3px 3px 0 0; background: linear-gradient(#fff, #d5d5e2); white-space: nowrap; }
.dtab.current { height: 21px; margin-bottom: -1px; width: 111px; border-top: 3px solid #ffb732; background: #fcfcfe; z-index: 1; }
.ring-tab { inset: -5px 0 -7px; }
.panel { border: 1px solid #919b9c; background: #fcfcfe; padding: 7px 7px 12px; margin-right: 2px; }
.fields { display: flex; flex-direction: column; gap: 3px; padding: 4px 0 0 9px; }
.line { display: flex; align-items: center; height: 20px; }
.line > label { width: 68px; }
.tall { margin: 0 0 1px; }
.mid { width: 95px; }
.sel select { background: #b2b4bf; outline: 1px dotted #444; outline-offset: -1px; margin: 1px; padding-left: 1px; }
.spin { position: relative; display: flex; width: 57px; height: 19px; border: 1px solid #a5acb2; background: #fff; }
.spin input { flex: 1; padding-left: 2px; }
.ud { display: flex; flex-direction: column; justify-content: space-between; align-items: center; width: 15px; margin: 1px; padding: 2px 0; border: 1px solid #9a9aac; border-radius: 2px; background: linear-gradient(#f6f6fa, #d6d6e2 46%, #8a8a9a 46%, #8a8a9a 54%, #f6f6fa 54%, #d6d6e2); }
.ud::before, .ud::after { content: ""; border: 3px solid transparent; }
.ud::before { border-bottom-color: #222; border-top: 0; }
.ud::after { border-top-color: #222; border-bottom: 0; }
.right { margin-left: auto; display: grid; grid-template-columns: 95px 57px; gap: 8px; align-items: center; }
.fields + h3 { margin-top: 20px; }
.general + h3 { margin-top: 24px; }
.panel .checks { height: 19px; }
.ring-left { inset: -3px 53px -5px -19px; }
.ring-first { inset: -4px 33px -9px -11px; }
.ring-by { inset: -4px 18px -8px -6px; }
.ring-single { inset: -3px 50px -3px -6px; }
.preview.small { height: 82px; margin: 5px 0 0 9px; padding: 6px 0 0 22px; border-width: 1px; font-size: 6px; line-height: 6px; }
.small p { margin: 0; }
.small .first, .small .sampletext { text-indent: 8px; }

.rail { display: flex; flex-direction: column; align-items: center; width: 16px; background: #a9c6ef; border-left: 1px solid #c3d9f6; }
.splitter { width: 9px; height: 2px; margin: 3px 0 4px; background: #34466b; }
.rail button { height: 14px; }
.track { flex: 1; align-self: stretch; display: flex; flex-direction: column; align-items: center; margin: 1px 1px 0; padding: 6px 0 5px; background: linear-gradient(90deg, #6689b8, #7f9dc8); }
.tri.dark { border-width: 0 4px 4px; border-bottom-color: #3b4a6d; }
.tri.dark.end { margin-top: auto; border-width: 4px 4px 0; border-top-color: #3b4a6d; }
.thumb { width: 13px; height: 24px; margin-top: 5px; border: 1px solid #4f6a94; border-radius: 2px; background: repeating-linear-gradient(#8190a8 0 1px, transparent 1px 3px) center / 7px 10px no-repeat, linear-gradient(90deg, #f5f8fc, #ccd8ea); }
.rail .hop { height: 16px; }

.status { display: flex; align-items: stretch; height: 23px; border-top: 1px solid #dcebff; border-bottom: 3px solid #eceff4; background: linear-gradient(#dbe9fc, #b5d0f5 45%, #cfe0f8); color: #1f3a78; }
.status > button { padding: 0 9px 0 8px; border-right: 1px solid #8faedb; }
.status .lang { display: flex; align-items: center; gap: 16px; }
.viewbar { margin-left: auto; display: flex; align-items: center; padding: 0 5px; border-left: 2px solid #eaf3ff; background: linear-gradient(#a9c4ea, #7fa3d6 50%, #86a9da); }
.views { display: flex; height: 17px; border: 1px solid #6f92c6; border-radius: 2px; background: linear-gradient(#d3e2f6, #a9c4ea); }
.views button { display: grid; place-items: center; width: 17px; }
.views .on { background: linear-gradient(#f9c778, #ffe08a); }
.pct { padding: 0 8px; }
.round { display: grid; place-items: center; width: 15px; height: 15px; border: 1px solid #42618f; border-radius: 50%; background: radial-gradient(#fff, #c4d4ea); }
.zoom { appearance: none; width: 97px; height: 15px; background: linear-gradient(#dce9fb, #dce9fb) center / 100% 2px no-repeat; }
.zoom::-webkit-slider-thumb { appearance: none; width: 9px; height: 13px; border: 1px solid #42618f; border-radius: 1px 1px 5px 5px; background: #dfe8f5; }
```
